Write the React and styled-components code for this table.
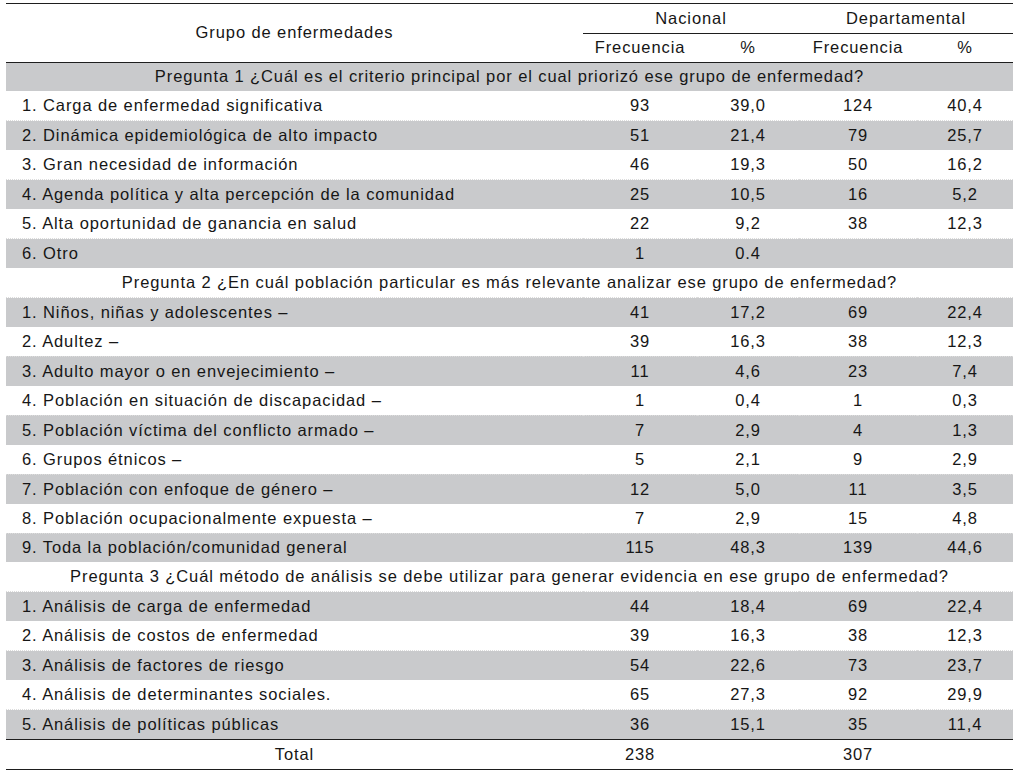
import React from "react";
import styled, { createGlobalStyle } from "styled-components";

const Global = createGlobalStyle`
  html, body { margin: 0; padding: 0; background: #ffffff; }
  body { font-family: "Liberation Sans", Arial, sans-serif; }
`;

const Page = styled.div`
  padding: 3px 7px 0 6px;
  width: 1020px;
  box-sizing: border-box;
`;

const Table = styled.table`
  width: 1007px;
  border-collapse: collapse;
  table-layout: fixed;
  font-family: "Liberation Sans", Arial, sans-serif;
  font-size: 16.5px;
  letter-spacing: 0.9px;
  color: #161616;
  border-top: 1.5px solid #1e1e1e;
  border-bottom: 1.5px solid #1e1e1e;
`;

const Th = styled.th`
  font-weight: normal;
  text-align: center;
  padding: 0;
  height: ${(p) => p.$h || 29}px;
  vertical-align: middle;
  border-bottom: ${(p) => (p.$line ? "1.5px solid #1e1e1e" : "none")};
`;

const Row = styled.tr`
  background: ${(p) => (p.$gray ? "#c9cacc" : "#ffffff")};
  height: ${(p) => (p.$top ? 30 : 29.45)}px;
  border-top: ${(p) => (p.$top ? "1.5px solid #1e1e1e" : p.$gray ? "1px dotted #dcdcdc" : "none")};
`;

const Label = styled.td`
  text-align: left;
  padding: 0 0 0 16px;
  vertical-align: middle;
  white-space: nowrap;
`;

const Cell = styled.td`
  text-align: center;
  padding: 0;
  vertical-align: middle;
`;

const Section = styled.td`
  text-align: center;
  padding: 0;
  vertical-align: middle;
  white-space: nowrap;
`;

const sections = [
  {
    title:
      "Pregunta 1 ¿Cuál es el criterio principal por el cual priorizó ese grupo de enfermedad?",
    rows: [
      ["1. Carga de enfermedad significativa", "93", "39,0", "124", "40,4"],
      ["2. Dinámica epidemiológica de alto impacto", "51", "21,4", "79", "25,7"],
      ["3. Gran necesidad de información", "46", "19,3", "50", "16,2"],
      ["4. Agenda política y alta percepción de la comunidad", "25", "10,5", "16", "5,2"],
      ["5. Alta oportunidad de ganancia en salud", "22", "9,2", "38", "12,3"],
      ["6. Otro", "1", "0.4", "", ""],
    ],
  },
  {
    title:
      "Pregunta 2 ¿En cuál población particular es más relevante analizar ese grupo de enfermedad?",
    rows: [
      ["1. Niños, niñas y adolescentes –", "41", "17,2", "69", "22,4"],
      ["2. Adultez –", "39", "16,3", "38", "12,3"],
      ["3. Adulto mayor o en envejecimiento –", "11", "4,6", "23", "7,4"],
      ["4. Población en situación de discapacidad –", "1", "0,4", "1", "0,3"],
      ["5. Población víctima del conflicto armado –", "7", "2,9", "4", "1,3"],
      ["6. Grupos étnicos –", "5", "2,1", "9", "2,9"],
      ["7. Población con enfoque de género –", "12", "5,0", "11", "3,5"],
      ["8. Población ocupacionalmente expuesta –", "7", "2,9", "15", "4,8"],
      ["9. Toda la población/comunidad general", "115", "48,3", "139", "44,6"],
    ],
  },
  {
    title:
      "Pregunta 3 ¿Cuál método de análisis se debe utilizar para generar evidencia en ese grupo de enfermedad?",
    rows: [
      ["1. Análisis de carga de enfermedad", "44", "18,4", "69", "22,4"],
      ["2. Análisis de costos de enfermedad", "39", "16,3", "38", "12,3"],
      ["3. Análisis de factores de riesgo", "54", "22,6", "73", "23,7"],
      ["4. Análisis de determinantes sociales.", "65", "27,3", "92", "29,9"],
      ["5. Análisis de políticas públicas", "36", "15,1", "35", "11,4"],
    ],
  },
];

export default function App() {
  let idx = 0;
  const body = [];
  sections.forEach((s, si) => {
    const g = idx % 2 === 0;
    idx++;
    body.push(
      <Row key={`s${si}`} $gray={g}>
        <Section colSpan={5}>{s.title}</Section>
      </Row>
    );
    s.rows.forEach((r, ri) => {
      const gr = idx % 2 === 0;
      idx++;
      body.push(
        <Row key={`r${si}-${ri}`} $gray={gr}>
          <Label>{r[0]}</Label>
          <Cell>{r[1]}</Cell>
          <Cell>{r[2]}</Cell>
          <Cell>{r[3]}</Cell>
          <Cell>{r[4]}</Cell>
        </Row>
      );
    });
  });

  return (
    <Page>
      <Global />
      <Table>
        <colgroup>
          <col style={{ width: 577 }} />
          <col style={{ width: 114 }} />
          <col style={{ width: 102 }} />
          <col style={{ width: 118 }} />
          <col style={{ width: 96 }} />
        </colgroup>
        <thead>
          <tr>
            <Th rowSpan={2} $line>
              Grupo de enfermedades
            </Th>
            <Th colSpan={2} $h={29} $line>
              Nacional
            </Th>
            <Th colSpan={2} $h={29} $line>
              Departamental
            </Th>
          </tr>
          <tr>
            <Th $h={27.5} $line>Frecuencia</Th>
            <Th $h={27.5} $line>%</Th>
            <Th $h={27.5} $line>Frecuencia</Th>
            <Th $h={27.5} $line>%</Th>
          </tr>
        </thead>
        <tbody>
          {body}
          <Row $top>
            <Cell>Total</Cell>
            <Cell>238</Cell>
            <Cell></Cell>
            <Cell>307</Cell>
            <Cell></Cell>
          </Row>
        </tbody>
      </Table>
    </Page>
  );
}
